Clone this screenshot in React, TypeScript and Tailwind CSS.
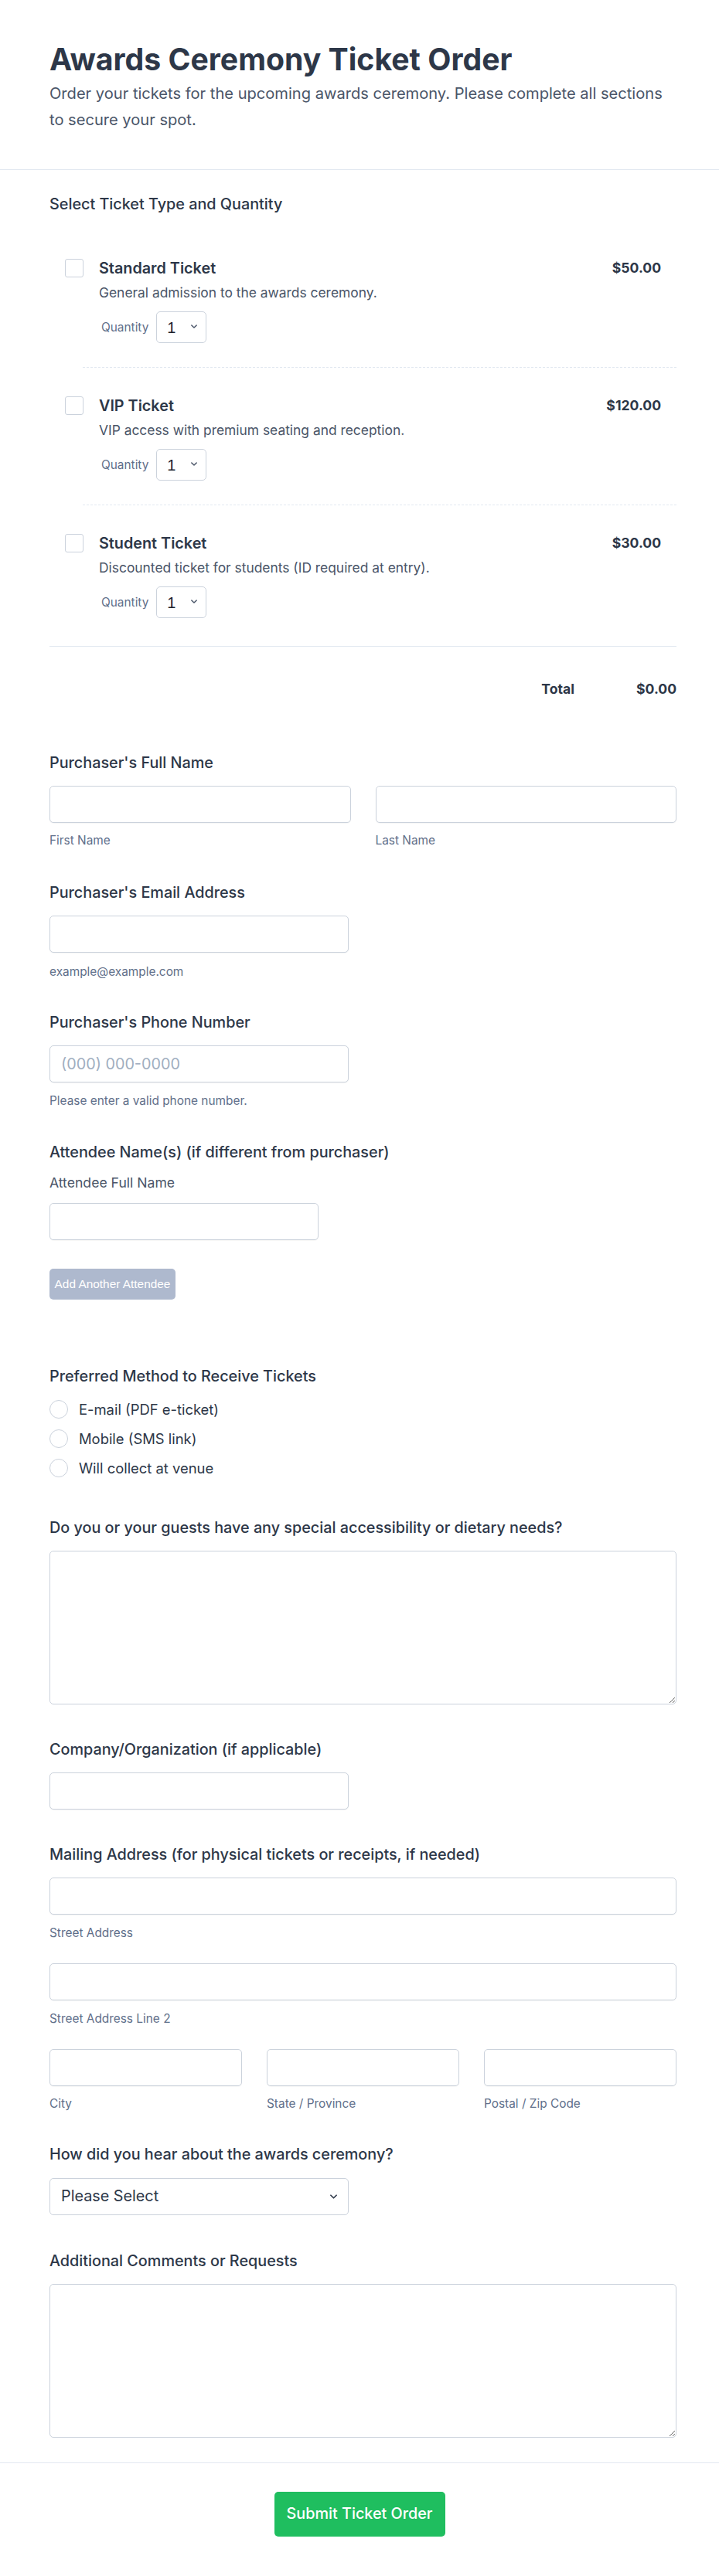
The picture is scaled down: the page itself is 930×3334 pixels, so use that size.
import { useState } from 'react';

const TICKETS = [
  { id: 'standard', name: 'Standard Ticket', price: 50, desc: 'General admission to the awards ceremony.' },
  { id: 'vip', name: 'VIP Ticket', price: 120, desc: 'VIP access with premium seating and reception.' },
  { id: 'student', name: 'Student Ticket', price: 30, desc: 'Discounted ticket for students (ID required at entry).' },
];

const METHODS = ['E-mail (PDF e-ticket)', 'Mobile (SMS link)', 'Will collect at venue'];

function Chevron({ className }: { className?: string }) {
  return (
    <svg viewBox="0 0 10 6" className={className} fill="none" stroke="currentColor" strokeWidth="1.8" strokeLinecap="round" strokeLinejoin="round">
      <path d="M1 1l4 4 4-4" />
    </svg>
  );
}

const inputCls =
  'block h-12 w-full rounded-[5px] border border-[#cbd2dc] bg-white px-3.5 text-[19.8px] text-[#2d3748] shadow-[0_1px_1px_rgba(0,0,0,0.04)] outline-none placeholder:text-[#a0aec0]';
const labelCls = 'block text-[19.8px] font-medium leading-7 text-[#2d3748]';
const subCls = 'text-[15.4px] leading-5 text-[#5f6f8a]';

export default function App() {
  const [checked, setChecked] = useState<Record<string, boolean>>({});
  const [qty, setQty] = useState<Record<string, number>>({ standard: 1, vip: 1, student: 1 });
  const [method, setMethod] = useState('');

  const total = TICKETS.reduce((sum, t) => (checked[t.id] ? sum + t.price * (qty[t.id] || 1) : sum), 0);

  return (
    <div className="min-h-screen bg-white font-['Inter',sans-serif] text-[#2d3748]">
      {/* Header */}
      <header className="border-b border-[#e2e8f0] pb-[47px] pl-16 pr-[55px] pt-[55px]">
        <h1 className="text-[39.2px] font-bold leading-[44px] text-[#2d3748]">Awards Ceremony Ticket Order</h1>
        <p className="mt-[5px] max-w-[805px] text-[20.1px] leading-[34px] text-[#4a5568]">
          Order your tickets for the upcoming awards ceremony. Please complete all sections to secure your spot.
        </p>
      </header>

      <main className="pb-[32px] pl-16 pr-[55px]">
        {/* Tickets */}
        <section className="pt-[30px]">
          <h2 className={labelCls}>Select Ticket Type and Quantity</h2>
          <div className="mt-5">
            {TICKETS.map((t, i) => (
              <div key={t.id}>
                {i > 0 && <div className="ml-[43px] border-t border-dashed border-[#e2e8f0]" />}
                <div className={`flex items-start px-5 pt-[35px] ${i === TICKETS.length - 1 ? 'pb-[36px]' : 'pb-[31px]'}`}>
                  <input
                    type="checkbox"
                    checked={!!checked[t.id]}
                    onChange={(e) => setChecked({ ...checked, [t.id]: e.target.checked })}
                    className="mt-0.5 h-6 w-6 shrink-0 cursor-pointer appearance-none rounded-[3px] border border-[#cbd2dc] bg-white checked:border-[#1fbe5f] checked:bg-[#1fbe5f]"
                  />
                  <div className="ml-5 flex-1">
                    <div className="flex items-start justify-between">
                      <span className="text-[19.8px] font-semibold leading-7 text-[#2d3748]">{t.name}</span>
                      <span className="text-[17.6px] font-bold leading-7 text-[#2d3748]">${t.price.toFixed(2)}</span>
                    </div>
                    <p className="mt-1.5 text-[17.4px] leading-6 text-[#4a5568]">{t.desc}</p>
                    <div className="mt-3 flex items-center">
                      <span className="ml-[3px] text-[15.4px] text-[#5f6f8a]">Quantity</span>
                      <div className="relative ml-2.5">
                        <select
                          value={qty[t.id]}
                          onChange={(e) => setQty({ ...qty, [t.id]: Number(e.target.value) })}
                          className="h-[41px] w-[65px] appearance-none rounded-[5px] border border-[#cbd2dc] bg-white pl-[13px] font-['Liberation_Sans',sans-serif] text-xl text-[#1a202c] outline-none"
                        >
                          {[1, 2, 3, 4, 5, 6, 7, 8, 9, 10].map((n) => (
                            <option key={n} value={n}>{n}</option>
                          ))}
                        </select>
                        <Chevron className="pointer-events-none absolute right-[12px] top-[17px] h-[5px] w-[8px] text-[#4a5568]" />
                      </div>
                    </div>
                  </div>
                </div>
              </div>
            ))}
          </div>
          <div className="flex justify-end border-t border-[#e2e8f0] pt-[43px] text-[17.6px] font-bold leading-6 text-[#2d3748]">
            <span>Total</span>
            <span className="ml-20">${total.toFixed(2)}</span>
          </div>
        </section>

        {/* Full name */}
        <div className="mt-[69px]">
          <label className={labelCls}>Purchaser's Full Name</label>
          <div className="mt-4 grid grid-cols-2 gap-8">
            <div>
              <input className={inputCls} />
              <p className={`mt-[13px] ${subCls}`}>First Name</p>
            </div>
            <div>
              <input className={inputCls} />
              <p className={`mt-[13px] ${subCls}`}>Last Name</p>
            </div>
          </div>
        </div>

        {/* Email */}
        <div className="mt-[43px]">
          <label className={labelCls}>Purchaser's Email Address</label>
          <div className="mt-4 w-[387px]">
            <input type="email" className={inputCls} />
          </div>
          <p className={`mt-[15px] ${subCls}`}>example@example.com</p>
        </div>

        {/* Phone */}
        <div className="mt-[41px]">
          <label className={labelCls}>Purchaser's Phone Number</label>
          <div className="mt-4 w-[387px]">
            <input type="tel" placeholder="(000) 000-0000" className={inputCls} />
          </div>
          <p className={`mt-[14px] ${subCls}`}>Please enter a valid phone number.</p>
        </div>

        {/* Attendees */}
        <div className="mt-[42px]">
          <label className={labelCls}>Attendee Name(s) (if different from purchaser)</label>
          <p className="mt-3.5 text-[17.6px] leading-6 text-[#4a5568]">Attendee Full Name</p>
          <div className="mt-3.5 w-[348px]">
            <input className={inputCls} />
          </div>
          <button
            type="button"
            className="mt-[37px] h-10 w-[163px] rounded-[5px] bg-[#aeb9ce] font-['Liberation_Sans',sans-serif] text-[15.4px] text-white"
          >
            Add Another Attendee
          </button>
        </div>

        {/* Delivery method */}
        <div className="mt-[85px]">
          <label className={labelCls}>Preferred Method to Receive Tickets</label>
          <div className="mt-[15px] space-y-2.5">
            {METHODS.map((m) => (
              <label key={m} className="flex cursor-pointer items-center gap-3.5">
                <input
                  type="radio"
                  name="method"
                  checked={method === m}
                  onChange={() => setMethod(m)}
                  className="h-6 w-6 shrink-0 appearance-none rounded-full border border-[#cbd2dc] bg-white checked:border-[7px] checked:border-[#1fbe5f]"
                />
                <span className="text-[18.4px] leading-7 text-[#2d3748]">{m}</span>
              </label>
            ))}
          </div>
        </div>

        {/* Accessibility */}
        <div className="mt-[49px]">
          <label className={labelCls}>Do you or your guests have any special accessibility or dietary needs?</label>
          <textarea className="mt-4 block h-[199px] w-full rounded-[5px] border border-[#cbd2dc] bg-white p-3.5 text-lg outline-none" />
        </div>

        {/* Company */}
        <div className="mt-[44px]">
          <label className={labelCls}>Company/Organization (if applicable)</label>
          <div className="mt-4 w-[387px]">
            <input className={inputCls} />
          </div>
        </div>

        {/* Mailing address */}
        <div className="mt-[44px]">
          <label className={labelCls}>Mailing Address (for physical tickets or receipts, if needed)</label>
          <input className={`mt-4 ${inputCls}`} />
          <p className={`mt-[14px] ${subCls}`}>Street Address</p>
          <input className={`mt-[29px] ${inputCls}`} />
          <p className={`mt-[14px] ${subCls}`}>Street Address Line 2</p>
          <div className="mt-[29px] grid grid-cols-3 gap-8">
            <div>
              <input className={inputCls} />
              <p className={`mt-[13px] ${subCls}`}>City</p>
            </div>
            <div>
              <input className={inputCls} />
              <p className={`mt-[13px] ${subCls}`}>State / Province</p>
            </div>
            <div>
              <input className={inputCls} />
              <p className={`mt-[13px] ${subCls}`}>Postal / Zip Code</p>
            </div>
          </div>
        </div>

        {/* Referral */}
        <div className="mt-[41px]">
          <label className={labelCls}>How did you hear about the awards ceremony?</label>
          <div className="relative mt-[17px] w-[387px]">
            <select className="block h-12 w-full appearance-none rounded-[5px] border border-[#cbd2dc] bg-white pl-3.5 text-[19.8px] text-[#2d3748] outline-none">
              <option>Please Select</option>
              <option>Social Media</option>
              <option>Email Newsletter</option>
              <option>Friend or Colleague</option>
              <option>Website</option>
              <option>Other</option>
            </select>
            <Chevron className="pointer-events-none absolute right-[15px] top-[21px] h-[6px] w-[9px] text-[#2d3748]" />
          </div>
        </div>

        {/* Comments */}
        <div className="mt-[45px]">
          <label className={labelCls}>Additional Comments or Requests</label>
          <textarea className="mt-4 block h-[199px] w-full rounded-[5px] border border-[#cbd2dc] bg-white p-3.5 text-lg outline-none" />
        </div>
      </main>

      {/* Footer */}
      <footer className="flex justify-center border-t border-[#e2e8f0] pb-[51px] pt-[37px]">
        <button type="submit" className="h-[58px] w-[221px] rounded-[5px] bg-[#1fbe5f] text-[19.8px] font-medium text-white">
          Submit Ticket Order
        </button>
      </footer>
    </div>
  );
}
